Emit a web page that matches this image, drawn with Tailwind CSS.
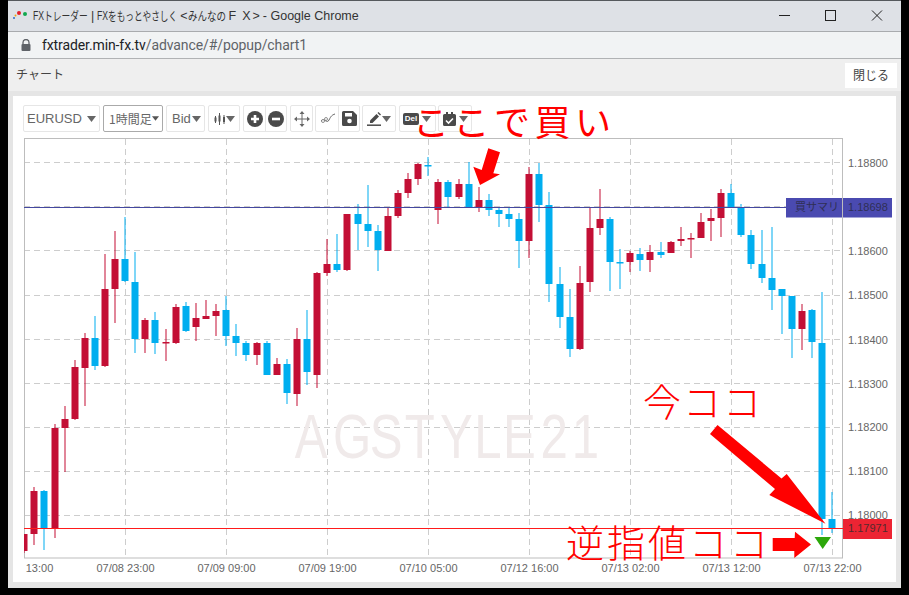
<!DOCTYPE html>
<html lang="ja">

<head>
    <meta charset="UTF-8">
    <title>FXトレーダー chart1</title>
    <script src="https://cdn.jsdelivr.net/npm/@tailwindcss/browser@4"></script>
</head>

<body class="bg-black w-[909px] h-[595px] overflow-hidden font-['Liberation_Sans','Noto_Sans_CJK_JP',sans-serif]">

    <div class="ml-2 w-[893px] h-[588px] flex flex-col bg-[#e5e5e5] border-t border-[#55595d]">

        <!-- window title -->
        <div class="h-[31px] shrink-0 bg-[#dee1e6] border-b border-[#a9abae] flex items-center">
            <svg class="ml-[4px] w-[16px] h-[16px]" viewBox="0 0 16 16">
                <circle cx="2" cy="10" r="1" fill="#2b6cc4" />
                <circle cx="3.5" cy="7.5" r="1" fill="#f2a30f" />
                <circle cx="7" cy="5" r="2" fill="#e5202a" />
                <circle cx="13" cy="6" r="2" fill="#12a84f" />
            </svg>
            <div class="ml-[5px] flex items-center text-[12.5px] text-[#333] whitespace-nowrap">
                <span class="inline-block w-[11px] text-[12px] origin-left scale-x-[0.72]">FX</span>
                <span class="inline-block w-[44px] text-[12px] origin-left scale-x-[0.73] font-['Noto_Sans_CJK_JP',sans-serif]">トレーダー</span>
                <span class="ml-[3px]">|</span>
                <span class="ml-[3px] inline-block w-[11px] text-[12px] origin-left scale-x-[0.72]">FX</span>
                <span class="inline-block w-[69px] text-[12px] origin-left scale-x-[0.72] font-['Noto_Sans_CJK_JP',sans-serif]">をもっとやさしく</span>
                <span class="ml-[3px]">&lt;</span>
                <span class="inline-block w-[38px] text-[12px] origin-left scale-x-[0.79] font-['Noto_Sans_CJK_JP',sans-serif]">みんなの</span>
                <span class="ml-[3px]">F</span>
                <span class="ml-[6px]">X</span>
                <span class="ml-[2px]">&gt;</span>
                <span class="ml-[3px]">- Google Chrome</span>
            </div>
            <div class="ml-auto mr-[-4px] flex items-center">
                <svg class="w-[46px] h-[30px]" viewBox="0 0 46 30"><path d="M12 14.500h11" stroke="#222" stroke-width="1" /></svg>
                <svg class="w-[46px] h-[30px]" viewBox="0 0 46 30"><rect x="12.5" y="9.500" width="10" height="10" fill="none" stroke="#222" /></svg>
                <svg class="w-[46px] h-[30px]" viewBox="0 0 46 30"><path d="M13 9.500l10 10M23 9.500l-10 10" stroke="#222" fill="none" /></svg>
            </div>
        </div>

        <!-- address bar -->
        <div class="h-[27px] shrink-0 bg-[#f1f3f4] border-b border-[#b0b2b4] flex items-center">
            <svg class="ml-[13px] w-[10px] h-[12px]" viewBox="0 0 10 12">
                <path d="M2 5V3.5a3 3 0 0 1 6 0V5" fill="none" stroke="#5f6368" stroke-width="1.3" />
                <rect x="0.5" y="5" width="9" height="7" rx="1" fill="#5f6368" />
            </svg>
            <span class="ml-[11px] text-[14px] tracking-[-0.1px] text-[#5f6368] whitespace-nowrap font-['Roboto',sans-serif]"><span class="text-[#202124]">fxtrader.min-fx.tv</span>/advance/#/popup/chart1</span>
        </div>

        <!-- page header -->
        <div class="h-[32px] shrink-0 bg-[#efefef] flex items-center justify-between">
            <span class="ml-[8px] mb-[2px] text-[12px] text-[#444] font-['Noto_Sans_CJK_JP',sans-serif]">チャート</span>
            <button class="mr-[4px] w-[52px] h-[25px] bg-white text-[12px] text-[#444] font-['Noto_Sans_CJK_JP',sans-serif]">閉じる</button>
        </div>

        <!-- panel -->
        <div class="mx-[5px] mt-[5px] w-[883px] h-[486px] bg-white relative">

            <!-- toolbar -->
            <div class="pt-[9px] pl-[10px] flex gap-[3px] h-[42px] text-[13px] text-[#666]">
                <div class="w-[77px] h-[27px] border border-[#e6e6e6] rounded-[2px] flex items-center justify-between pl-[3px] pr-[3px]">
                    EURUSD
                    <svg class="w-[9px] h-[6px]" viewBox="0 0 9 6"><path d="M0 0h9L4.500 6z" fill="#666" /></svg>
                </div>
                <div class="w-[60px] h-[27px] border border-[#aaa] rounded-[2px] flex items-center justify-between pl-[5px] pr-[3px] text-[12px] whitespace-nowrap font-['Noto_Sans_CJK_JP',sans-serif]">
                    1時間足
                    <svg class="w-[7px] h-[5px] shrink-0" viewBox="0 0 9 6"><path d="M0 0h9L4.500 6z" fill="#555" /></svg>
                </div>
                <div class="w-[39px] h-[27px] border border-[#e6e6e6] rounded-[2px] flex items-center justify-between pl-[5px] pr-[3px]">
                    Bid
                    <svg class="w-[9px] h-[6px]" viewBox="0 0 9 6"><path d="M0 0h9L4.500 6z" fill="#666" /></svg>
                </div>
                <div class="w-[32px] h-[27px] border border-[#e6e6e6] rounded-[2px] flex items-center justify-between pl-[5px] pr-[4px]">
                    <svg class="w-[12px] h-[12px]" viewBox="0 0 12 12"><path d="M1.500 3v7M5.500 0v12M10 2v9" stroke="#555" /><path d="M0.500 4.500h2v4h-2zM4.500 2.500h2v6h-2zM9 4h2v5h-2z" fill="#555" /></svg>
                    <svg class="w-[9px] h-[6px]" viewBox="0 0 9 6"><path d="M0 0h9L4.500 6z" fill="#666" /></svg>
                </div>
                <div class="w-[44px] h-[27px] border border-[#e6e6e6] rounded-[2px] flex">
                    <div class="w-[22px] border-r border-[#e6e6e6] flex items-center justify-center">
                        <svg class="w-[16px] h-[16px]" viewBox="0 0 16 16"><circle cx="8" cy="8" r="8" fill="#4a4a4a" /><path d="M8 4v8M4 8h8" stroke="#fff" stroke-width="2.600" /></svg>
                    </div>
                    <div class="flex-1 flex items-center justify-center">
                        <svg class="w-[16px] h-[16px]" viewBox="0 0 16 16"><circle cx="8" cy="8" r="8" fill="#4a4a4a" /><path d="M4 8h8" stroke="#fff" stroke-width="2.600" /></svg>
                    </div>
                </div>
                <div class="w-[23px] h-[27px] border border-[#e6e6e6] rounded-[2px] flex items-center justify-center">
                    <svg class="w-[16px] h-[16px]" viewBox="0 0 16 16"><path d="M8 1v14M1 8h14" stroke="#666" /><path d="M8 0l2.500 3h-5zM8 16l2.500-3h-5zM0 8l3-2.500v5zM16 8l-3-2.500v5z" fill="#666" /></svg>
                </div>
                <div class="w-[45px] h-[27px] border border-[#e6e6e6] rounded-[2px] flex ml-[-1px]">
                    <div class="w-[23px] border-r border-[#e6e6e6] flex items-center justify-center">
                        <svg class="w-[15px] h-[11px]" viewBox="0 0 15 11"><path d="M1 8C5 5 7 11 9 7S12 2 15 1" fill="none" stroke="#666" /><circle cx="3" cy="8" r="1.500" fill="#fff" stroke="#666" stroke-width="0.700" /><circle cx="6" cy="6" r="1.500" fill="#fff" stroke="#666" stroke-width="0.700" /></svg>
                    </div>
                    <div class="flex-1 flex items-center justify-center">
                        <svg class="w-[15px] h-[15px]" viewBox="0 0 15 15"><path d="M1.500 0H11l4 4v9.500a1.500 1.500 0 0 1-1.500 1.500h-12A1.500 1.500 0 0 1 0 13.500v-12A1.500 1.500 0 0 1 1.500 0z" fill="#4a4a4a" /><rect x="3" y="2" width="7" height="3.500" fill="#fff" /><circle cx="7.500" cy="10" r="2.300" fill="#fff" /></svg>
                    </div>
                </div>
                <div class="w-[34px] h-[27px] border border-[#e6e6e6] rounded-[2px] flex items-center justify-between pl-[4px] pr-[4px] ml-[-1px]">
                    <svg class="w-[15px] h-[15px]" viewBox="0 0 15 15"><path d="M3 9.500L9.500 3l2.500 2.500L5.500 12H3z" fill="#4a4a4a" /><path d="M10.500 2l1-1 2.500 2.500-1 1z" fill="#4a4a4a" /><path d="M0 14.200h14" stroke="#4a4a4a" stroke-width="1.500" /></svg>
                    <svg class="w-[9px] h-[6px]" viewBox="0 0 9 6"><path d="M0 0h9L4.500 6z" fill="#666" /></svg>
                </div>
                <div class="w-[37px] h-[27px] border border-[#e6e6e6] rounded-[2px] flex items-center justify-between pl-[3px] pr-[4px]">
                    <span class="w-[16px] h-[12px] rounded-[2px] bg-[#4a4a4a] text-white text-[8px] font-bold leading-[12px] text-center">Del</span>
                    <svg class="w-[9px] h-[6px]" viewBox="0 0 9 6"><path d="M0 0h9L4.500 6z" fill="#666" /></svg>
                </div>
                <div class="w-[34px] h-[27px] border border-[#e6e6e6] rounded-[2px] flex items-center justify-between pl-[4px] pr-[3px] ml-[-1px]">
                    <svg class="w-[13px] h-[14px]" viewBox="0 0 13 14"><path d="M1.500 2h10A1.500 1.500 0 0 1 13 3.500v9a1.500 1.500 0 0 1-1.500 1.500h-10A1.500 1.500 0 0 1 0 12.500v-9A1.500 1.500 0 0 1 1.500 2z" fill="#4a4a4a" /><path d="M3 0h2v3H3zM8 0h2v3H8z" fill="#4a4a4a" /><path d="M3 8.500l2.500 2.500L10 6.500" fill="none" stroke="#fff" stroke-width="1.600" /></svg>
                    <svg class="w-[9px] h-[6px]" viewBox="0 0 9 6"><path d="M0 0h9L4.500 6z" fill="#666" /></svg>
                </div>
            </div>

            <!-- chart -->
            <div class="relative w-[883px] h-[444px]">
                <svg id="chart" class="absolute left-0 top-0" width="883" height="444" viewBox="13 138 883 444"></svg>
            </div>
        </div>
    </div>

    <!-- hand written notes on top of the screenshot -->
    <span class="absolute left-[413px] top-[94px] text-[36px] leading-[52px] tracking-[4.5px] text-[#ff0000] whitespace-nowrap font-['Noto_Sans_CJK_JP',sans-serif]">ここで買い</span>
    <span class="absolute left-[643px] top-[372px] text-[38px] leading-[56px] tracking-[2px] font-light text-[#ff0000] whitespace-nowrap font-['Noto_Sans_CJK_JP',sans-serif]">今ココ</span>
    <span class="absolute left-[566px] top-[513px] text-[38px] leading-[56px] tracking-[3px] font-light text-[#ff0000] whitespace-nowrap font-['Noto_Sans_CJK_JP',sans-serif]">逆指値ココ</span>

    <script>
        // body top, body bottom, wick top, wick bottom, r = red / b = blue
        const candles = [
            [534, 551, 534, 553, 'r'], [491, 534, 487, 545, 'r'], [491, 528, 490, 550, 'b'], [428, 528, 424, 538, 'r'],
            [419, 428, 406, 472, 'r'], [367, 419, 360, 420, 'r'], [338, 368, 333, 406, 'r'], [338, 366, 316, 370, 'b'],
            [289, 366, 254, 367, 'r'], [259, 289, 231, 323, 'r'], [259, 281, 217, 282, 'b'], [282, 339, 252, 353, 'b'],
            [320, 339, 318, 353, 'r'], [320, 343, 312, 354, 'b'], [342, 343.500, 329, 361, 'r'], [307, 343, 304, 344, 'r'],
            [306, 331, 302, 332, 'b'], [318, 327, 303, 341, 'r'], [316, 319, 300, 319, 'r'], [311, 316, 304, 336, 'r'],
            [310, 336, 296, 346, 'b'], [336, 343, 324, 356, 'b'], [343, 355, 341, 361, 'b'], [343, 355, 342, 365, 'r'],
            [343, 375, 341, 375, 'b'], [364, 375, 358, 375, 'r'], [364, 393, 359, 404, 'b'], [339, 394, 328, 406, 'r'],
            [339, 372, 310, 385, 'b'], [273, 375, 272, 388, 'r'], [264, 273, 239, 276, 'r'], [264, 270, 234, 272, 'b'],
            [214, 270, 214, 271, 'r'], [214, 224, 204, 250, 'b'], [224, 231, 185, 247, 'b'], [231, 250, 225, 271, 'b'],
            [216, 251, 208, 251, 'r'], [193, 216, 190, 218, 'r'], [179, 193, 173, 198, 'r'], [164, 179, 163, 185, 'r'],
            [165, 166.500, 157, 176, 'b'], [182, 210, 179, 224, 'r'], [182, 197, 180, 207, 'b'], [184, 197, 179, 199, 'r'],
            [184, 207, 162, 207, 'b'], [200, 207, 187, 212, 'r'], [200, 210, 194, 216, 'b'], [210, 214, 207, 227, 'b'],
            [214, 219, 207, 227, 'b'], [219, 241, 213, 268, 'b'], [174, 241, 167, 258, 'r'], [174, 205, 163, 222, 'b'],
            [205, 284, 192, 302, 'b'], [284, 317, 267, 328, 'b'], [317, 349, 289, 357, 'b'], [283, 349, 266, 350, 'r'],
            [228, 282, 207, 292, 'r'], [219, 228, 189, 235, 'r'], [219, 262, 217, 291, 'b'], [262, 263.500, 249, 289, 'b'],
            [253, 262, 251, 272, 'r'], [254, 260, 248, 271, 'b'], [252, 260, 245, 272, 'r'], [252, 255, 242, 258, 'b'],
            [242, 253, 241, 253, 'r'], [239, 241, 227, 246, 'r'], [238, 239.500, 233, 258, 'r'], [222, 238, 213, 238, 'r'],
            [218, 221, 209, 241, 'r'], [193, 218, 189, 237, 'r'], [193, 207, 184, 207, 'b'], [207, 235, 204, 237, 'b'],
            [235, 264, 230, 269, 'b'], [264, 278, 230, 283, 'b'], [278, 290, 227, 310, 'b'], [289, 296, 289, 334, 'b'],
            [296, 329, 296, 358, 'b'], [311, 329, 304, 350, 'r'], [310, 342, 309, 358, 'b'], [343, 519, 292, 535, 'b'],
            [519, 528, 492, 533, 'b']
        ];

        const prices = [[162.500, '1.18800'], [250.500, '1.18600'], [295, '1.18500'], [339.500, '1.18400'], [383.500, '1.18300'], [427, '1.18200'], [471, '1.18100'], [515, '1.18000']];
        const times = [[39.500, '13:00'], [125.500, '07/08 23:00'], [226.500, '07/09 09:00'], [327.500, '07/09 19:00'], [428.500, '07/10 05:00'], [529.500, '07/12 16:00'], [630.500, '07/13 02:00'], [731.500, '07/13 12:00'], [832.500, '07/13 22:00']];

        let s = '<defs><clipPath id="plot"><rect x="24" y="139" width="818" height="419"/></clipPath></defs>';

        // grid
        const dash = 'stroke="#cdcdcd" stroke-dasharray="6 4" shape-rendering="crispEdges"';
        for (const [y] of prices.concat([[206.500]])) s += `<line x1="24" x2="842" y1="${y}" y2="${y}" ${dash}/>`;
        s += `<line x1="24.500" x2="24.500" y1="139" y2="558" ${dash}/>`;
        for (const [x, t] of times.slice(1)) s += `<line x1="${x}" x2="${x}" y1="139" y2="558" ${dash}/>`;
        s += '<rect x="24.500" y="138.500" width="818" height="419.500" fill="none" stroke="#bdbdbd"/>';

        // watermark
        s += '<text transform="translate(0 458) scale(0.78 1)" x="378 427 474 519 564 608 645 693 733" font-family="Liberation Sans" font-size="63" fill="#f0eaea">AGSTYLE21</text>';

        // candles
        s += '<g clip-path="url(#plot)">';
        candles.forEach((c, i) => {
            const x = Math.round(24.2 + 10.1 * i);
            const col = c[4] == 'r' ? '#c30f35' : '#00aeef';
            s += `<rect x="${x - 0.5}" y="${c[2]}" width="1" height="${c[3] - c[2]}" fill="${col}"/>`;
            s += `<rect x="${x - 3.5}" y="${c[0]}" width="7" height="${c[1] - c[0]}" fill="${col}"/>`;
        });
        s += '</g>';

        // price lines
        s += '<rect x="24" y="207" width="762" height="1" fill="#44489f"/>';
        s += '<rect x="24" y="528" width="819" height="1" fill="#ff1a1a"/>';

        // axis labels
        for (const [y, t] of prices) s += `<text x="848" y="${y + 4}" font-family="Liberation Sans" font-size="11" fill="#666">${t}</text>`;
        times.forEach(([x, t]) => {
            s += `<text x="${x}" y="572" text-anchor="middle" font-family="Liberation Sans" font-size="11" fill="#666">${t}</text>`;
        });

        // position labels
        s += '<rect x="786" y="198" width="56" height="19.500" fill="#4a4ab0"/><rect x="843" y="198" width="49" height="19.500" fill="#4a4ab0"/>';
        s += '<text x="795" y="211" font-family="Noto Sans CJK JP" font-size="11" fill="#2f2f55">買サマリ</text>';
        s += '<text x="848" y="211" font-family="Liberation Sans" font-size="11" fill="#2f2f55">1.18698</text>';
        s += '<rect x="843" y="519" width="49" height="20" fill="#ec2433"/>';
        s += '<text x="848" y="532" font-family="Liberation Sans" font-size="11" fill="#55292c">1.17971</text>';
        s += '<polygon points="814.500,537 831,537 822.700,549" fill="#2ca70a"/>';

        // arrows
        s += '<g fill="#ff0000">';
        s += '<polygon points="710,434 717.500,425 781.500,478.500 786.700,474 825.500,523.700 769.300,495 775,489"/>';
        s += '<polygon points="772.700,538 794.700,538 795,531.700 811,544.500 794.300,558 794.300,551 772.700,551"/>';
        s += '<polygon points="488.300,148.300 500,152.300 493.300,173.300 500,174.300 480,185 473.300,166.700 481.700,170"/>';
        s += '</g>';

        document.getElementById('chart').innerHTML = s;
    </script>

</body>

</html>
